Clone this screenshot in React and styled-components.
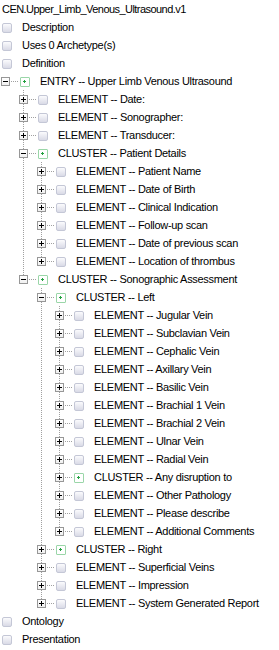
import React from 'react';
import styled, { createGlobalStyle } from 'styled-components';

const GlobalStyle = createGlobalStyle`
  body {
    margin: 0;
    background: #ffffff;
  }
`;

const STEP = 18;

const tree = [
  { label: 'Description' },
  { label: 'Uses 0 Archetype(s)' },
  { label: 'Definition' },
  {
    label: 'ENTRY -- Upper Limb Venous Ultrasound',
    cluster: true,
    open: true,
    children: [
      { label: 'ELEMENT -- Date:' },
      { label: 'ELEMENT -- Sonographer:' },
      { label: 'ELEMENT -- Transducer:' },
      {
        label: 'CLUSTER -- Patient Details',
        cluster: true,
        open: true,
        children: [
          { label: 'ELEMENT -- Patient Name' },
          { label: 'ELEMENT -- Date of Birth' },
          { label: 'ELEMENT -- Clinical Indication' },
          { label: 'ELEMENT -- Follow-up scan' },
          { label: 'ELEMENT -- Date of previous scan' },
          { label: 'ELEMENT -- Location of thrombus' },
        ],
      },
      {
        label: 'CLUSTER -- Sonographic Assessment',
        cluster: true,
        open: true,
        children: [
          {
            label: 'CLUSTER -- Left',
            cluster: true,
            open: true,
            children: [
              { label: 'ELEMENT -- Jugular Vein' },
              { label: 'ELEMENT -- Subclavian Vein' },
              { label: 'ELEMENT -- Cephalic Vein' },
              { label: 'ELEMENT -- Axillary Vein' },
              { label: 'ELEMENT -- Basilic Vein' },
              { label: 'ELEMENT -- Brachial 1 Vein' },
              { label: 'ELEMENT -- Brachial 2 Vein' },
              { label: 'ELEMENT -- Ulnar Vein' },
              { label: 'ELEMENT -- Radial Vein' },
              { label: 'CLUSTER -- Any disruption to', cluster: true },
              { label: 'ELEMENT -- Other Pathology' },
              { label: 'ELEMENT -- Please describe' },
              { label: 'ELEMENT -- Additional Comments' },
            ],
          },
          { label: 'CLUSTER -- Right', cluster: true },
          { label: 'ELEMENT -- Superficial Veins' },
          { label: 'ELEMENT -- Impression' },
          { label: 'ELEMENT -- System Generated Report' },
        ],
      },
    ],
  },
  { label: 'Ontology' },
  { label: 'Presentation' },
];

const Tree = styled.div`
  font-family: 'Liberation Sans', Arial, sans-serif;
  font-size: 11px;
  letter-spacing: -0.3px;
  color: #000000;
  width: 279px;
  white-space: nowrap;
  overflow: hidden;
`;

const Title = styled.div`
  height: 18px;
  line-height: 18px;
  padding-left: 2px;
  letter-spacing: -0.55px;
`;

const Branch = styled.div`
  position: relative;

  &::before {
    content: '';
    display: ${(p) => (p.$lines ? 'block' : 'none')};
    position: absolute;
    left: ${(p) => p.$x}px;
    top: 0;
    width: 1px;
    height: ${(p) => (p.$last ? '10px' : '100%')};
    background-image: linear-gradient(to bottom, #a0a0a0 50%, transparent 50%);
    background-size: 1px 2px;
  }
`;

const Row = styled.div`
  display: flex;
  align-items: center;
  height: 18px;
  padding-left: ${(p) => p.$indent}px;
`;

const ExpanderSlot = styled.span`
  display: flex;
  align-items: center;
  width: 18px;
  height: 18px;
  flex: none;
`;

const ExpanderBox = styled.span`
  position: relative;
  z-index: 1;
  box-sizing: border-box;
  width: 9px;
  height: 9px;
  margin: 1px 0 0 1px;
  border: 1px solid #979797;
  background: linear-gradient(#ffffff, #f0f0f0);
  flex: none;

  &::before {
    content: '';
    position: absolute;
    left: 1px;
    top: 3px;
    width: 5px;
    height: 1px;
    background: #000000;
  }

  &::after {
    content: '';
    display: ${(p) => (p.$open ? 'none' : 'block')};
    position: absolute;
    left: 3px;
    top: 1px;
    width: 1px;
    height: 5px;
    background: #000000;
  }
`;

const Stub = styled.span`
  flex: 1;
  height: 1px;
  margin-top: 1px;
  background-image: linear-gradient(to right, #a0a0a0 50%, transparent 50%);
  background-size: 2px 1px;
  background-position: 1px 0;
`;

const IconSlot = styled.span`
  display: flex;
  align-items: center;
  width: 22px;
  height: 18px;
  padding-left: 2px;
  box-sizing: border-box;
  flex: none;
`;

const ElementIcon = styled.span`
  box-sizing: border-box;
  width: 10px;
  height: 10px;
  margin-top: 1px;
  border: 1px solid #c4c7d6;
  border-radius: 2px;
  background: linear-gradient(#fbfbfd, #d9dae6);
`;

const ClusterIcon = styled.span`
  position: relative;
  box-sizing: border-box;
  width: 10px;
  height: 10px;
  margin-top: 1px;
  border: 1px solid #9ad6a8;
  border-radius: 1px;
  background: #ffffff;

  &::before {
    content: '';
    position: absolute;
    left: 2px;
    top: 3px;
    width: 3px;
    height: 1px;
    background: #22a03f;
  }

  &::after {
    content: '';
    position: absolute;
    left: 3px;
    top: 2px;
    width: 1px;
    height: 3px;
    background: #22a03f;
  }
`;

const Label = styled.span`
  line-height: 18px;
`;

function Node({ node, level, last, root }) {
  const expandable = !root || node.children || node.cluster;
  const indent = root ? 0 : level * STEP;
  return (
    <Branch $lines={!root} $last={last} $x={level * STEP + 5}>
      <Row $indent={indent}>
        {expandable && (
          <ExpanderSlot>
            <ExpanderBox $open={node.open} />
            <Stub />
          </ExpanderSlot>
        )}
        <IconSlot>{node.cluster ? <ClusterIcon /> : <ElementIcon />}</IconSlot>
        <Label>{node.label}</Label>
      </Row>
      {node.open &&
        node.children.map((child, i) => (
          <Node
            key={child.label}
            node={child}
            level={level + 1}
            last={i === node.children.length - 1}
          />
        ))}
    </Branch>
  );
}

export default function App() {
  return (
    <>
      <GlobalStyle />
      <Tree>
        <Title>CEN.Upper_Limb_Venous_Ultrasound.v1</Title>
        {tree.map((node) => (
          <Node key={node.label} node={node} level={0} root />
        ))}
      </Tree>
    </>
  );
}
